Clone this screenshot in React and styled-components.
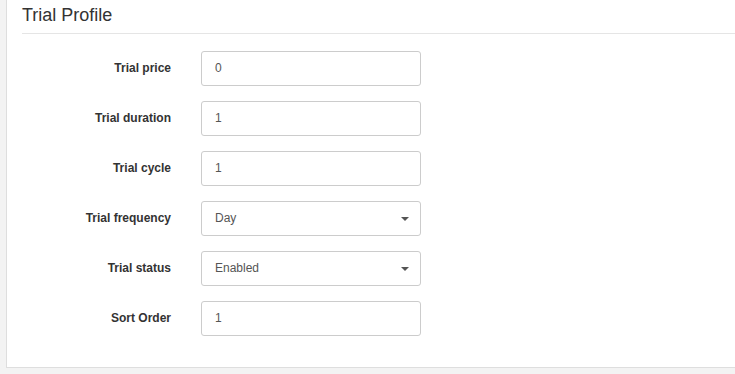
import React from 'react'
import styled, { createGlobalStyle } from 'styled-components'

const GlobalStyle = createGlobalStyle`
html, body {
  margin:0;
  padding:0;
  background-color:#f3f3f3;
  font-family:"Liberation Sans", Arial, sans-serif;
  color:#333;
}
`
const Page = styled.div`
width:735px;
height:374px;
overflow:hidden;
padding-left:6px;
box-sizing:border-box;
`
const Panel = styled.div`
width:760px;
background-color:white;
border:1px solid #dedede;
border-top:none;
padding:0 0 31px 15px;
`
const Header = styled.div`
padding:5px 0 7px;
border-bottom:1px solid #e5e5e5;
font-size:18px;
line-height:21px;
color:#333;
`
const Form = styled.div`
display:flex;
flex-direction:column;
gap:15px;
padding-top:17px;
`
const Row = styled.div`
display:flex;
align-items:center;
`
const Label = styled.label`
width:149px;
margin-right:30px;
padding-bottom:2px;
text-align:right;
font-size:12px;
font-weight:bold;
color:#333;
`
const Field = styled.div`
position:relative;
width:220px;
height:35px;
box-sizing:border-box;
border:1px solid #ccc;
border-radius:3px;
padding:0 0 2px 13px;
display:flex;
align-items:center;
font-size:12px;
color:#555;
`
const Caret = styled.span`
position:absolute;
right:11px;
top:15px;
width:0;
height:0;
border-left:4px solid transparent;
border-right:4px solid transparent;
border-top:4px solid #555;
`

const fields = [
  { label: 'Trial price', value: '0' },
  { label: 'Trial duration', value: '1' },
  { label: 'Trial cycle', value: '1' },
  { label: 'Trial frequency', value: 'Day', select: true },
  { label: 'Trial status', value: 'Enabled', select: true },
  { label: 'Sort Order', value: '1' },
]

const App = () => {
  return (
    <Page>
      <GlobalStyle />
      <Panel>
        <Header>Trial Profile</Header>
        <Form>
          {fields.map((f, index) => (
            <Row key={index}>
              <Label>{f.label}</Label>
              <Field>
                {f.value}
                {f.select && <Caret />}
              </Field>
            </Row>
          ))}
        </Form>
      </Panel>
    </Page>
  )
}

export default App
